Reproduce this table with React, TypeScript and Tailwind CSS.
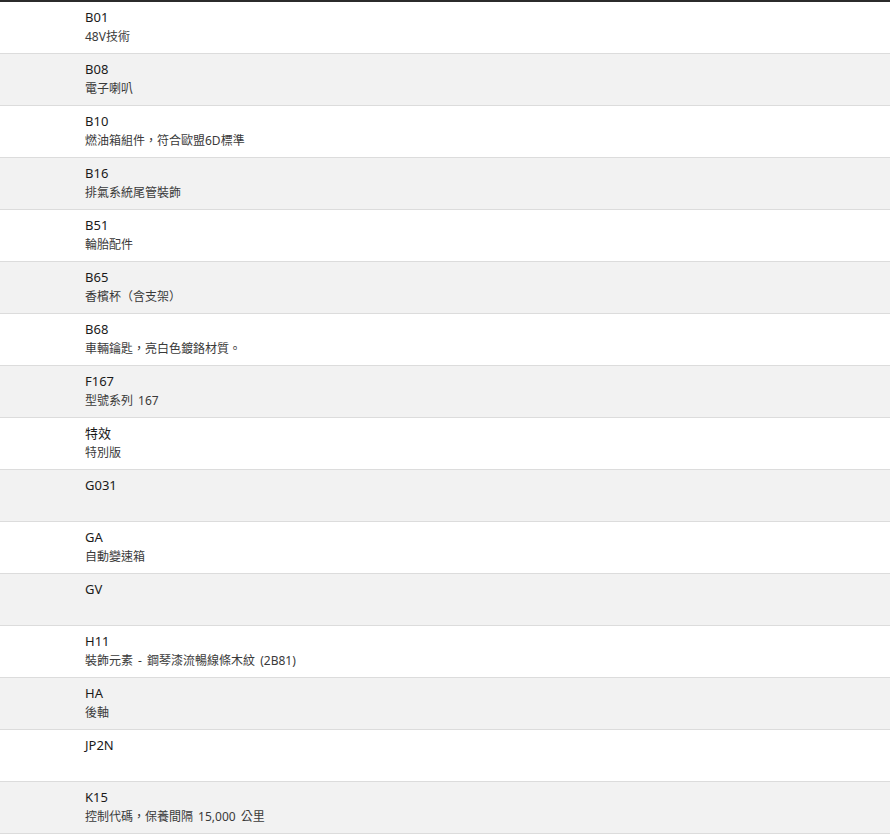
const rows: { code: string; desc?: string }[] = [
  { code: 'B01', desc: '48V技術' },
  { code: 'B08', desc: '電子喇叭' },
  { code: 'B10', desc: '燃油箱組件，符合歐盟6D標準' },
  { code: 'B16', desc: '排氣系統尾管裝飾' },
  { code: 'B51', desc: '輪胎配件' },
  { code: 'B65', desc: '香檳杯（含支架）' },
  { code: 'B68', desc: '車輛鑰匙，亮白色鍍鉻材質。' },
  { code: 'F167', desc: '型號系列 167' },
  { code: '特效', desc: '特別版' },
  { code: 'G031' },
  { code: 'GA', desc: '自動變速箱' },
  { code: 'GV' },
  { code: 'H11', desc: '裝飾元素 - 鋼琴漆流暢線條木紋 (2B81)' },
  { code: 'HA', desc: '後軸' },
  { code: 'JP2N' },
  { code: 'K15', desc: '控制代碼，保養間隔 15,000 公里' },
];

export default function App() {
  return (
    <div
      lang="zh-TW"
      className="w-[890px] min-h-[837px] bg-white border-t-2 border-[#2b2b2b]"
      style={{ fontFamily: '"Noto Sans", "Noto Sans CJK TC", sans-serif' }}
    >
      {rows.map((row, i) => (
        <div
          key={row.code}
          className={`h-[52px] border-b border-[#dcdcdc] pl-[85px] pt-[5px] ${
            i % 2 === 1 ? 'bg-[#f2f2f2]' : 'bg-white'
          }`}
        >
          <div className="text-[13px] leading-[20px] text-[#1a1a1a]">{row.code}</div>
          <div className="text-[12px] leading-[20px] text-[#3a3a3a] [word-spacing:2px]">
            {row.desc ?? ''}
          </div>
        </div>
      ))}
    </div>
  );
}
